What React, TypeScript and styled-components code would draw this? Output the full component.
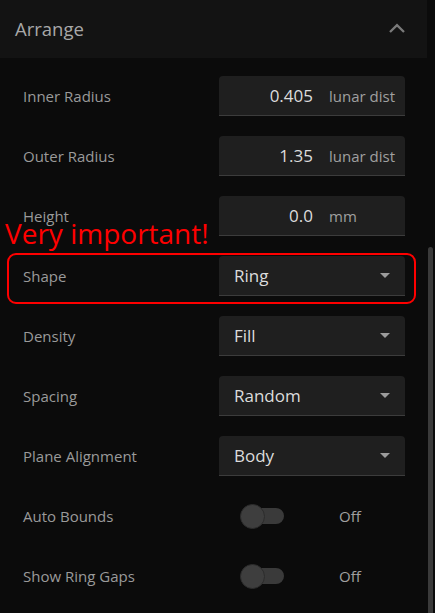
import React from "react";
import styled, { createGlobalStyle } from "styled-components";

const GlobalStyle = createGlobalStyle`
  html, body {
    margin: 0;
    padding: 0;
    background: #0b0b0b;
    font-family: "Open Sans", "Noto Sans", sans-serif;
  }
`;

type Field =
  | { kind: "number"; label: string; value: string; unit: string }
  | { kind: "select"; label: string; value: string }
  | { kind: "toggle"; label: string; on: boolean };

const fields: Field[] = [
  { kind: "number", label: "Inner Radius", value: "0.405", unit: "lunar dist" },
  { kind: "number", label: "Outer Radius", value: "1.35", unit: "lunar dist" },
  { kind: "number", label: "Height", value: "0.0", unit: "mm" },
  { kind: "select", label: "Shape", value: "Ring" },
  { kind: "select", label: "Density", value: "Fill" },
  { kind: "select", label: "Spacing", value: "Random" },
  { kind: "select", label: "Plane Alignment", value: "Body" },
  { kind: "toggle", label: "Auto Bounds", on: false },
  { kind: "toggle", label: "Show Ring Gaps", on: false },
];

function App() {
  return (
    <>
      <GlobalStyle />
      <Panel>
        <Content>
          <Header>
            <HeaderTitle>Arrange</HeaderTitle>
            <Chevron width="16" height="10" viewBox="0 0 16 10">
              <path
                d="M1 9 L8 2.2 L15 9"
                fill="none"
                stroke="#7a7a7a"
                strokeWidth="2.3"
              />
            </Chevron>
          </Header>
          <Rows>
            {fields.map((f) => (
              <Row key={f.label}>
                <Label>{f.label}</Label>
                {f.kind === "number" && (
                  <InputBox>
                    <NumberValue>{f.value}</NumberValue>
                    <Unit>{f.unit}</Unit>
                  </InputBox>
                )}
                {f.kind === "select" && (
                  <InputBox>
                    <SelectValue>{f.value}</SelectValue>
                    <Caret />
                  </InputBox>
                )}
                {f.kind === "toggle" && (
                  <ToggleWrap>
                    <Switch>
                      <Track />
                      <Thumb $on={f.on} />
                    </Switch>
                    <ToggleText>{f.on ? "On" : "Off"}</ToggleText>
                  </ToggleWrap>
                )}
              </Row>
            ))}
          </Rows>
          <Annotation>Very important!</Annotation>
          <Highlight />
        </Content>
        <ScrollTrack>
          <ScrollThumb />
        </ScrollTrack>
      </Panel>
    </>
  );
}

const Panel = styled.div`
  width: 435px;
  height: 613px;
  overflow: hidden;
  display: flex;
  background: #0b0b0b;
`;

const Content = styled.div`
  position: relative;
  width: 427px;
  display: flex;
  flex-direction: column;
`;

const Header = styled.div`
  height: 58px;
  flex-shrink: 0;
  background: #131313;
  display: flex;
  align-items: center;
  justify-content: space-between;
  padding: 0 22px 2px 15px;
  box-sizing: border-box;
`;

const HeaderTitle = styled.span`
  font-size: 18.5px;
  color: #a8a8a8;
`;

const Chevron = styled.svg`
  margin-bottom: 1px;
`;

const Rows = styled.div`
  display: flex;
  flex-direction: column;
  padding-top: 8px;
`;

const Row = styled.div`
  height: 60px;
  flex-shrink: 0;
  display: flex;
  align-items: center;
  padding-left: 23px;
`;

const Label = styled.span`
  width: 196px;
  font-size: 15px;
  color: #9a9a9a;
`;

const InputBox = styled.div`
  width: 186px;
  height: 40px;
  box-sizing: border-box;
  background: #1f1f1f;
  border-radius: 4px 4px 0 0;
  border-bottom: 1px solid #3c3c3c;
  display: flex;
  align-items: center;
`;

const NumberValue = styled.span`
  width: 94px;
  text-align: right;
  font-size: 17px;
  color: #dcdcdc;
`;

const Unit = styled.span`
  margin-left: 16px;
  font-size: 15px;
  color: #a0a0a0;
`;

const SelectValue = styled.span`
  flex: 1;
  padding-left: 15px;
  font-size: 17px;
  color: #dcdcdc;
`;

const Caret = styled.span`
  width: 0;
  height: 0;
  margin-right: 15px;
  border-left: 5px solid transparent;
  border-right: 5px solid transparent;
  border-top: 5px solid #9c9c9c;
`;

const ToggleWrap = styled.div`
  display: flex;
  align-items: center;
  padding-left: 21px;
`;

const Switch = styled.div`
  position: relative;
  width: 45px;
  height: 25px;
`;

const Track = styled.span`
  position: absolute;
  left: 12px;
  top: 4.5px;
  width: 32px;
  height: 16px;
  border-radius: 8px;
  background: #3a3a3a;
`;

const Thumb = styled.span<{ $on: boolean }>`
  position: absolute;
  left: ${({ $on }) => ($on ? "20px" : "0")};
  top: 0;
  width: 25px;
  height: 25px;
  box-sizing: border-box;
  border-radius: 50%;
  background: #3e3e3e;
  border: 1px solid #2c2c2c;
`;

const ToggleText = styled.span`
  margin-left: 54px;
  font-size: 15px;
  color: #a0a0a0;
`;

const Annotation = styled.div`
  position: absolute;
  left: 5px;
  top: 215px;
  font-size: 28px;
  line-height: 1.3;
  color: #ff0000;
`;

const Highlight = styled.div`
  position: absolute;
  left: 7px;
  top: 253px;
  width: 409px;
  height: 51px;
  box-sizing: border-box;
  border: 2px solid #ff0000;
  border-radius: 9px;
`;

const ScrollTrack = styled.div`
  width: 8px;
  display: flex;
  flex-direction: column;
  padding-top: 247px;
`;

const ScrollThumb = styled.div`
  width: 5px;
  margin-left: 1px;
  flex: 1;
  margin-bottom: -10px;
  border-radius: 3px;
  background: #3a3a3a;
`;

export default App;
